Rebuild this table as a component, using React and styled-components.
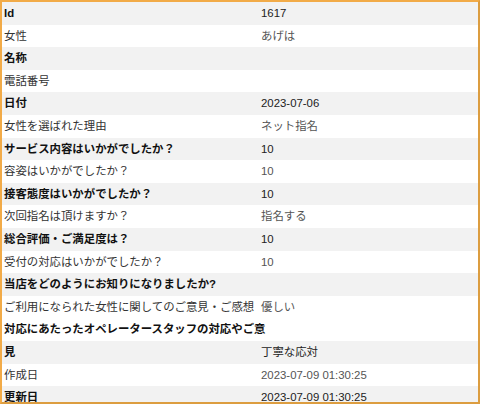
import React from "react";
import styled, { createGlobalStyle, css } from "styled-components";

const GlobalStyle = createGlobalStyle`
  html, body { margin: 0; padding: 0; background: #fff; }
  body { font-family: "Liberation Sans", "Noto Sans CJK JP", sans-serif; }
`;

const Frame = styled.div`
  box-sizing: border-box;
  width: 480px;
  height: 404px;
  overflow: hidden;
  border: 2px solid #f2ab48;
  border-right-color: #dc9d40;
  border-bottom-color: #dc9d40;
  background: #fff;
`;

const List = styled.dl`
  margin: 0;
  padding: 0;
`;

const Row = styled.div`
  display: grid;
  grid-template-columns: 257px 1fr;
  grid-auto-rows: 22.6px;
  padding: 0 2px;
  font-size: 11.4px;
  line-height: 22.6px;
  background: ${(p) => (p.$odd ? "#f2f2f2" : "#ffffff")};
  ${(p) =>
    p.$wide &&
    css`
      background: linear-gradient(#ffffff 50%, #f2f2f2 50%);
    `}
`;

const Label = styled.dt`
  margin: 0;
  white-space: nowrap;
  font-weight: ${(p) => (p.$odd ? 700 : 400)};
  color: ${(p) => (p.$odd ? "#111" : "#333")};
  ${(p) =>
    p.$wide &&
    css`
      white-space: normal;
      grid-column: 1 / 3;
      grid-row: 1 / 3;
      max-width: 268px;
    `}
`;

const Value = styled.dd`
  margin: 0;
  white-space: nowrap;
  color: ${(p) => (p.$odd ? "#222" : "#555")};
  ${(p) =>
    p.$wide &&
    css`
      grid-column: 2;
      grid-row: 2;
    `}
`;

const rows = [
  ["Id", "1617"],
  ["女性", "あげは"],
  ["名称", ""],
  ["電話番号", ""],
  ["日付", "2023-07-06"],
  ["女性を選ばれた理由", "ネット指名"],
  ["サービス内容はいかがでしたか？", "10"],
  ["容姿はいかがでしたか？", "10"],
  ["接客態度はいかがでしたか？", "10"],
  ["次回指名は頂けますか？", "指名する"],
  ["総合評価・ご満足度は？", "10"],
  ["受付の対応はいかがでしたか？", "10"],
  ["当店をどのようにお知りになりましたか?", ""],
  ["ご利用になられた女性に関してのご意見・ご感想", "優しい"],
  ["対応にあたったオペレータースタッフの対応やご意見", "丁寧な応対", true],
  ["作成日", "2023-07-09 01:30:25"],
  ["更新日", "2023-07-09 01:30:25"],
];

export default function App() {
  return (
    <>
      <GlobalStyle />
      <Frame>
        <List>
          {rows.map(([label, value, wide], i) => {
            const odd = i % 2 === 0;
            return (
              <Row key={label} $odd={odd} $wide={wide}>
                <Label $odd={odd} $wide={wide}>{label}</Label>
                <Value $odd={odd} $wide={wide}>{value}</Value>
              </Row>
            );
          })}
        </List>
      </Frame>
    </>
  );
}
